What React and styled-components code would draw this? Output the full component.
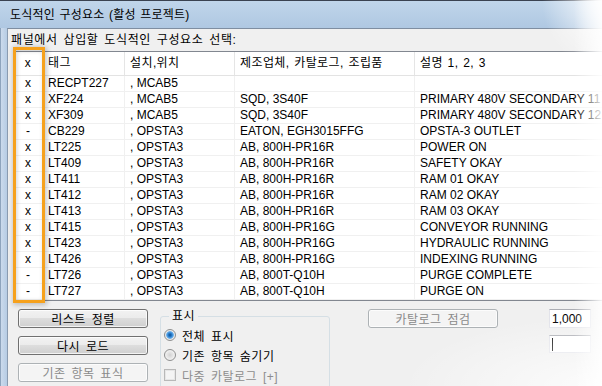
import React from 'react';
import styled, { createGlobalStyle } from 'styled-components';

const GlobalStyle = createGlobalStyle`
  html, body { margin: 0; padding: 0; background: #fff; }
  body {
    font-family: "Liberation Sans", "Noto Sans CJK KR", sans-serif;
    font-size: 12px;
    color: #000;
  }
`;

const columns = ['x', '태그', '설치,위치', '제조업체, 카탈로그, 조립품', '설명 1, 2, 3'];

const rows = [
  ['x', 'RECPT227', ', MCAB5', '', ''],
  ['x', 'XF224', ', MCAB5', 'SQD, 3S40F', 'PRIMARY 480V SECONDARY 11'],
  ['x', 'XF309', ', MCAB5', 'SQD, 3S40F', 'PRIMARY 480V SECONDARY 12'],
  ['-', 'CB229', ', OPSTA3', 'EATON, EGH3015FFG', 'OPSTA-3 OUTLET'],
  ['x', 'LT225', ', OPSTA3', 'AB, 800H-PR16R', 'POWER ON'],
  ['x', 'LT409', ', OPSTA3', 'AB, 800H-PR16R', 'SAFETY OKAY'],
  ['x', 'LT411', ', OPSTA3', 'AB, 800H-PR16R', 'RAM 01 OKAY'],
  ['x', 'LT412', ', OPSTA3', 'AB, 800H-PR16R', 'RAM 02 OKAY'],
  ['x', 'LT413', ', OPSTA3', 'AB, 800H-PR16R', 'RAM 03 OKAY'],
  ['x', 'LT415', ', OPSTA3', 'AB, 800H-PR16G', 'CONVEYOR RUNNING'],
  ['x', 'LT423', ', OPSTA3', 'AB, 800H-PR16G', 'HYDRAULIC RUNNING'],
  ['x', 'LT426', ', OPSTA3', 'AB, 800H-PR16G', 'INDEXING RUNNING'],
  ['-', 'LT726', ', OPSTA3', 'AB, 800T-Q10H', 'PURGE COMPLETE'],
  ['-', 'LT727', ', OPSTA3', 'AB, 800T-Q10H', 'PURGE ON'],
];

/* 창 */
const Window = styled.div`
  position: relative;
  width: 602px;
  height: 386px;
  overflow: hidden;
  display: flex;
  flex-direction: column;
  background: #f0f0f0;
`;

const TitleBar = styled.div`
  flex: none;
  height: 27px;
  border-top: 1px solid #3a4250;
  background: linear-gradient(180deg, #c0d5ea 0%, #afc8e2 100%);
  display: flex;
  align-items: center;
  padding-left: 10px;
`;

const Title = styled.span`
  font-size: 12px;
  line-height: 14px;
  letter-spacing: 0.2px;
  word-spacing: 1px;
`;

const Body = styled.div`
  flex: 1;
  display: flex;
  min-height: 0;
`;

const SideFrame = styled.div`
  flex: none;
  width: 7px;
  background: linear-gradient(90deg, #8ea4bd 0, #8ea4bd 1px, #cbdaec 1px, #b6cce4 100%);
`;

const Client = styled.div`
  flex: 1;
  min-width: 0;
  display: flex;
  flex-direction: column;
  border-left: 1px solid #8a9bb0;
  border-top: 1px solid #7f8ea1;
  background: #f0f0f0;
`;

const Prompt = styled.div`
  height: 22px;
  line-height: 22px;
  padding-left: 3px;
  letter-spacing: 0.6px;
  word-spacing: 2px;
`;

/* 리스트 */
const ListView = styled.div`
  flex: none;
  width: 640px;
  margin-left: 5px;
  border: 1px solid #828790;
  border-right: none;
  background: #fff;
`;

const Grid = styled.div`
  display: grid;
  grid-template-columns: 29px 82px 110px 180px 1fr;
  box-sizing: border-box;
  height: ${p => (p.head ? '24px' : '16px')};
  border-bottom: 1px solid ${p => (p.head ? '#e3e3e3' : '#f0f0f0')};
`;

const Cell = styled.div`
  box-sizing: border-box;
  padding: 0 ${p => (p.center ? '0' : '5px')};
  text-align: ${p => (p.center ? 'center' : 'left')};
  line-height: ${p => (p.head ? '23px' : '15px')};
  white-space: nowrap;
  overflow: hidden;
  border-right: 1px solid ${p => (p.head ? '#e5e5e5' : '#f0f0f0')};
  letter-spacing: ${p => (p.head ? '0.4px' : '0')};
  word-spacing: ${p => (p.head ? '1px' : '0')};
`;

/* 아래 컨트롤 */
const Controls = styled.div`
  display: flex;
  align-items: flex-start;
  margin: 8px 0 0 10px;
`;

const ButtonColumn = styled.div`
  display: flex;
  flex-direction: column;
  gap: 8px;
`;

const PushButton = styled.button`
  width: 130px;
  height: 19px;
  padding: 0;
  margin-left: ${p => p.$offset || 0}px;
  font-family: inherit;
  font-size: 12px;
  letter-spacing: 0.5px;
  word-spacing: 2px;
  border-radius: 3px;
  border: 1px solid ${p => (p.disabled ? '#adb2b5' : '#707070')};
  color: ${p => (p.disabled ? '#8a8a8a' : '#000')};
  background: ${p =>
    p.disabled
      ? '#f4f4f4'
      : 'linear-gradient(180deg, #f2f2f2 0%, #ebebeb 49%, #dddddd 50%, #cfcfcf 100%)'};
  box-shadow: inset 0 0 0 1px rgba(255, 255, 255, 0.75);
`;

const GroupBox = styled.fieldset`
  box-sizing: border-box;
  width: 170px;
  height: 100px;
  margin: 0 0 0 12px;
  padding: 0 0 0 3px;
  border: 1px solid #d5dfe5;
  border-radius: 3px;
`;

const Legend = styled.legend`
  padding: 0 3px;
  margin-left: 5px;
  line-height: 14px;
  letter-spacing: 0.5px;
`;

const Options = styled.div`
  display: flex;
  flex-direction: column;
  gap: 4px;
  padding-top: 4px;
`;

const Option = styled.div`
  display: flex;
  align-items: center;
  gap: 6px;
  height: 16px;
  letter-spacing: 0.5px;
  word-spacing: 2px;
  color: ${p => (p.disabled ? '#8d8d8d' : '#000')};
`;

const RadioDot = styled.span`
  box-sizing: border-box;
  width: 12px;
  height: 12px;
  border-radius: 50%;
  border: 1px solid #8e8f8f;
  background: ${p =>
    p.checked
      ? 'radial-gradient(circle, #0f4f8f 0, #2a7fcf 2px, #6fb2ea 3.5px, #e8e8e8 4.2px, #f9f9f9 100%)'
      : 'radial-gradient(circle, #d2d2d2 0, #eeeeee 60%, #fbfbfb 100%)'};
`;

const CheckBox = styled.span`
  box-sizing: border-box;
  width: 12px;
  height: 12px;
  border: 1px solid #b8b8b8;
  background: #f4f4f4;
  box-shadow: inset 0 0 0 1px #e6e6e6;
`;

const FieldColumn = styled.div`
  display: flex;
  flex-direction: column;
  gap: 7px;
  margin-left: 51px;
`;

const TextField = styled.div`
  box-sizing: border-box;
  width: 42px;
  height: ${p => p.$h}px;
  padding-left: 2px;
  display: flex;
  align-items: center;
  background: #fff;
  border: 1px solid #e2e3ea;
  border-top-color: #abadb3;
`;

const Caret = styled.span`
  width: 1px;
  height: 13px;
  background: #000;
`;

/* 주석용 오버레이 */
const Highlight = styled.div`
  position: absolute;
  left: 13px;
  top: 47px;
  width: 32px;
  height: 256px;
  box-sizing: border-box;
  border: 3px solid #f6a11c;
  box-shadow: 1px 1px 5px 1px rgba(0, 0, 0, 0.22), inset 1px 1px 4px rgba(0, 0, 0, 0.18);
  pointer-events: none;
`;

const Fade = styled.div`
  position: absolute;
  inset: 0;
  pointer-events: none;
  background:
    linear-gradient(90deg, rgba(255, 255, 255, 0) 574px, rgba(255, 255, 255, 0.9) 602px),
    radial-gradient(ellipse 60px 70px at 100% 0, rgba(255, 255, 255, 0.9) 0, rgba(255, 255, 255, 0) 100%),
    radial-gradient(ellipse 200px 70px at 100% 100%, rgba(255, 255, 255, 0.8) 0, rgba(255, 255, 255, 0) 100%);
`;

export default function App() {
  return (
    <>
      <GlobalStyle />
      <Window>
        <TitleBar>
          <Title>도식적인 구성요소 (활성 프로젝트)</Title>
        </TitleBar>
        <Body>
          <SideFrame />
          <Client>
            <Prompt>패널에서 삽입할 도식적인 구성요소 선택:</Prompt>

            <ListView>
              <Grid head>
                {columns.map((c, i) => (
                  <Cell head key={c} center={i === 0}>{c}</Cell>
                ))}
              </Grid>
              {rows.map(r => (
                <Grid key={r[1]}>
                  {r.map((v, i) => (
                    <Cell key={i} center={i === 0}>{v}</Cell>
                  ))}
                </Grid>
              ))}
            </ListView>

            <Controls>
              <ButtonColumn>
                <PushButton type="button">리스트 정렬</PushButton>
                <PushButton type="button">다시 로드</PushButton>
                <PushButton type="button" disabled>기존 항목 표식</PushButton>
              </ButtonColumn>

              <GroupBox>
                <Legend>표시</Legend>
                <Options>
                  <Option><RadioDot checked />전체 표시</Option>
                  <Option><RadioDot />기존 항목 숨기기</Option>
                  <Option disabled><CheckBox />다중 카탈로그 [+]</Option>
                </Options>
              </GroupBox>

              <PushButton type="button" disabled $offset={38}>카탈로그 점검</PushButton>

              <FieldColumn>
                <TextField $h={19}>1,000</TextField>
                <TextField $h={18}><Caret /></TextField>
              </FieldColumn>
            </Controls>
          </Client>
        </Body>
        <Highlight />
        <Fade />
      </Window>
    </>
  );
}
